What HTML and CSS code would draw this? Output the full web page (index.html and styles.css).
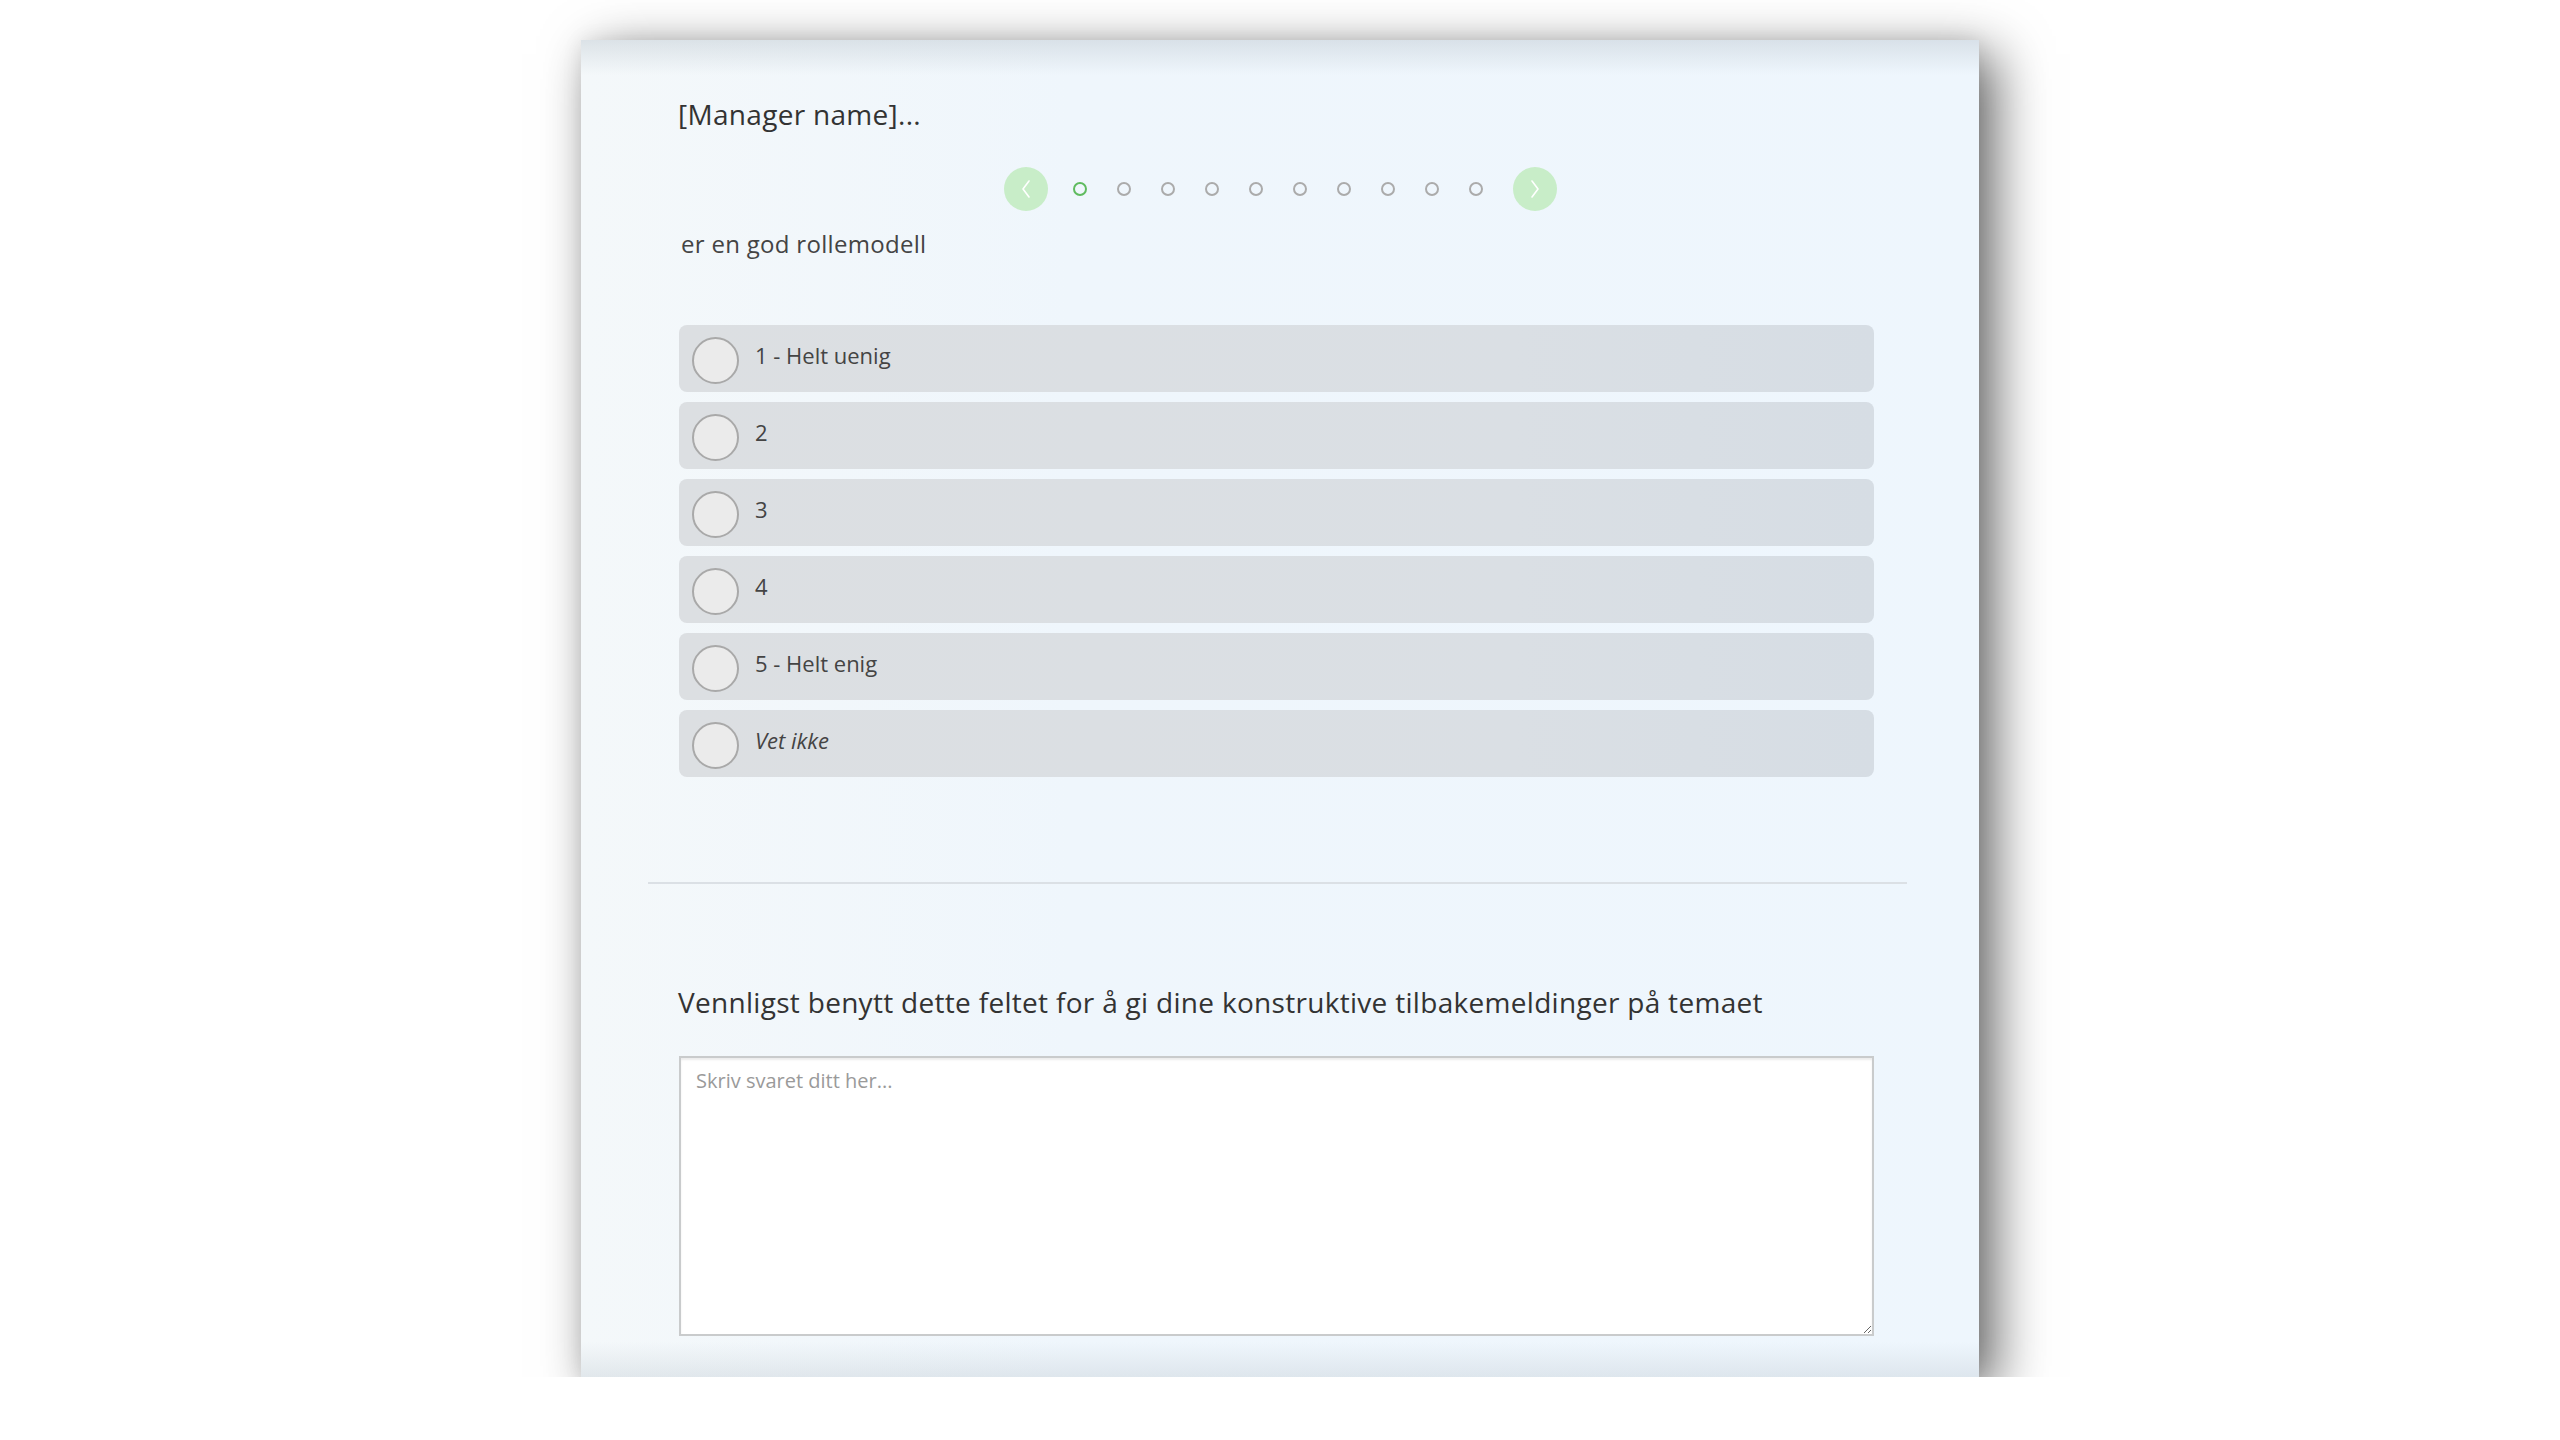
FILE: index.html
```html
<!DOCTYPE html>
<html lang="no">
<head>
    <meta charset="UTF-8">
    <meta name="viewport" content="width=device-width, initial-scale=1.0">
    <title>Spørreskjema</title>
    <link rel="stylesheet" href="styles.css">
</head>
<body>
    <div class="survey-card">
        <h2 class="question-title">[Manager name]...</h2>

        <!-- Navigasjon mellom spørsmål -->
        <div class="pager">
            <button class="pager-arrow prev" type="button">
                <svg width="12" height="20" viewBox="0 0 12 20"><path d="M9 2 L3 10 L9 18" fill="none" stroke="#fff" stroke-width="1.6" stroke-linecap="round" stroke-linejoin="round"/></svg>
            </button>
            <span class="pager-dot active"></span>
            <span class="pager-dot"></span>
            <span class="pager-dot"></span>
            <span class="pager-dot"></span>
            <span class="pager-dot"></span>
            <span class="pager-dot"></span>
            <span class="pager-dot"></span>
            <span class="pager-dot"></span>
            <span class="pager-dot"></span>
            <span class="pager-dot"></span>
            <button class="pager-arrow next" type="button">
                <svg width="12" height="20" viewBox="0 0 12 20"><path d="M3 2 L9 10 L3 18" fill="none" stroke="#fff" stroke-width="1.6" stroke-linecap="round" stroke-linejoin="round"/></svg>
            </button>
        </div>

        <p class="question-text">er en god rollemodell</p>

        <div class="options">
            <label class="option"><span class="radio"></span><span class="option-label">1 - Helt uenig</span></label>
            <label class="option"><span class="radio"></span><span class="option-label">2</span></label>
            <label class="option"><span class="radio"></span><span class="option-label">3</span></label>
            <label class="option"><span class="radio"></span><span class="option-label">4</span></label>
            <label class="option"><span class="radio"></span><span class="option-label">5 - Helt enig</span></label>
            <label class="option"><span class="radio"></span><span class="option-label dont-know">Vet ikke</span></label>
        </div>

        <hr class="divider">

        <h3 class="comment-title">Vennligst benytt dette feltet for å gi dine konstruktive tilbakemeldinger på temaet</h3>
        <textarea class="comment-box" placeholder="Skriv svaret ditt her..."></textarea>
    </div>
</body>
</html>
```

FILE: styles.css
```css
/* Side */
body {
    margin: 0;
    background-color: #fff;
    font-family: 'Open Sans', 'Noto Sans', sans-serif;
    color: #333;
}

/* Kortet med spørsmålet */
.survey-card {
    box-sizing: border-box;
    width: 1398px;
    height: 1337px;
    margin: 40px auto 0;
    padding: 56px 105px 41px 98px;
    background:
        linear-gradient(to bottom, rgba(190, 200, 208, 0.45), rgba(190, 200, 208, 0) 35px, rgba(190, 200, 208, 0) calc(100% - 35px), rgba(190, 200, 208, 0.35)),
        linear-gradient(to right, #f4f8fa, #eff6fc 35%, #eef6fd);
    box-shadow: 16px 14px 50px rgba(0, 0, 0, 0.6), 0 0 20px rgba(0, 0, 0, 0.07);
}

.question-title {
    margin: 0 0 0 -1px;
    font-size: 28px;
    letter-spacing: 0.3px;
    line-height: 36px;
    font-weight: 400;
    color: #333;
}

/* Navigasjon */
.pager {
    display: flex;
    justify-content: center;
    align-items: center;
    gap: 30px;
    margin-top: 35px;
    padding-left: 7px;
}

.pager-arrow {
    display: flex;
    align-items: center;
    justify-content: center;
    width: 44px;
    height: 44px;
    padding: 0;
    border: none;
    border-radius: 50%;
    background-color: #c8edc8;
}

.pager-arrow.prev {
    margin-right: -5px;
}

.pager-dot {
    box-sizing: border-box;
    width: 14px;
    height: 14px;
    border: 2.5px solid #ababab;
    border-radius: 50%;
}

.pager-dot.active {
    border-color: #5fbb5f;
}

.question-text {
    margin: 17px 0 0 2px;
    font-size: 24px;
    letter-spacing: 0.3px;
    line-height: 32px;
    color: #444;
}

/* Svaralternativer */
.options {
    display: flex;
    flex-direction: column;
    gap: 10px;
    margin-top: 65px;
}

.option {
    display: flex;
    align-items: center;
    height: 67px;
    padding: 3px 0 0 13px;
    box-sizing: border-box;
    border-radius: 8px;
    background: linear-gradient(to right, #dcdfe2, #dadfe4 70%, #d6dde4);
}

.radio {
    box-sizing: border-box;
    width: 47px;
    height: 47px;
    border: 2px solid #a9a9a9;
    border-radius: 50%;
    background-color: #ebebeb;
}

.option-label {
    margin-left: 16px;
    padding-bottom: 10px;
    font-size: 22px;
    color: #444;
}

.option-label.dont-know {
    font-style: italic;
}

.divider {
    margin: 105px -33px 0 -31px;
    border: none;
    border-top: 2px solid #dbe0e5;
}

/* Kommentarfelt */
.comment-title {
    margin: 100px 0 0 -1px;
    font-size: 28px;
    letter-spacing: 0.3px;
    line-height: 36px;
    font-weight: 400;
    color: #333;
}

.comment-box {
    display: block;
    box-sizing: border-box;
    width: 100%;
    height: 280px;
    margin-top: 36px;
    padding: 9px 15px;
    border: 2px solid #c9cbcc;
    box-shadow: inset 0 2px 2px rgba(0, 0, 0, 0.08);
    background-color: #fff;
    font-family: 'Open Sans', 'Noto Sans', sans-serif;
    font-size: 20px;
    line-height: 28px;
    color: #333;
}

.comment-box::placeholder {
    color: #9a9a9a;
}
```
